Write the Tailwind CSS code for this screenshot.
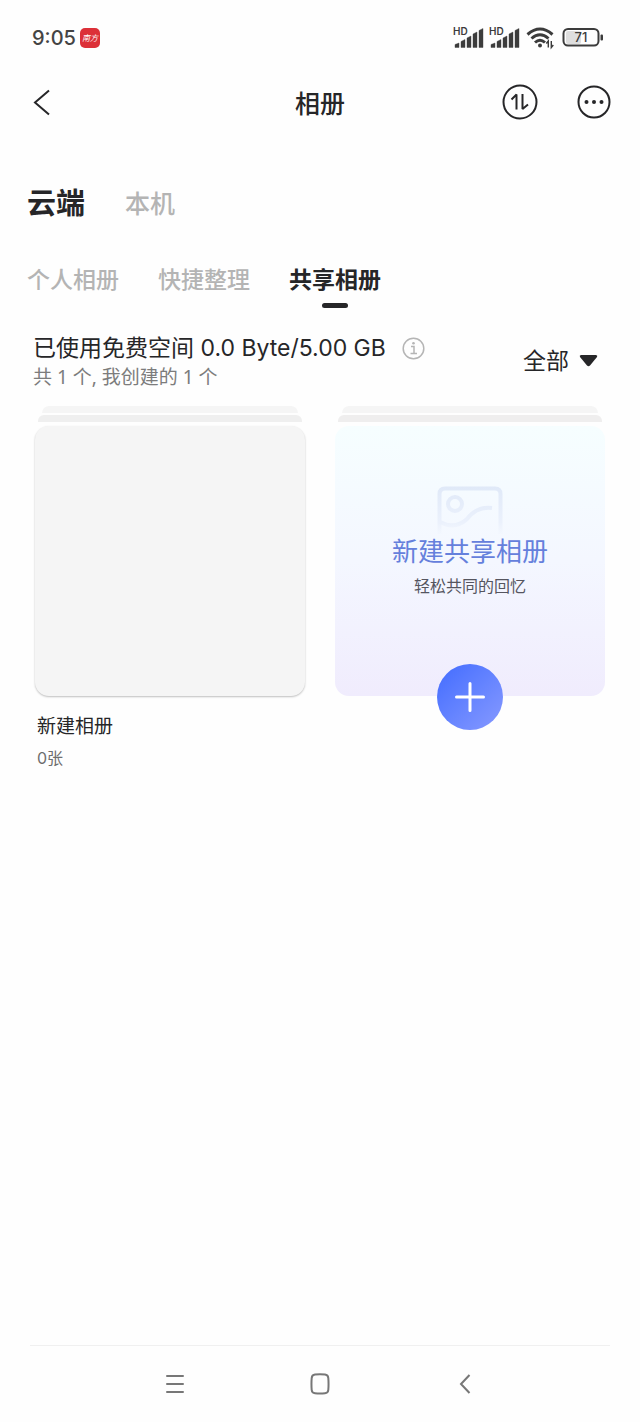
<!DOCTYPE html>
<html lang="zh-CN">
<head>
<meta charset="utf-8">
<meta name="viewport" content="width=device-width, initial-scale=1">
<title>相册</title>
<script src="https://cdn.jsdelivr.net/npm/@tailwindcss/browser@4"></script>
</head>
<body class="min-h-screen flex flex-col bg-[#fefefe] text-[#262628] font-['Inter','Noto_Sans_CJK_SC',sans-serif]">

<!-- Status bar -->
<div class="flex items-center justify-between pl-8 pr-9 pt-6 h-[52px]">
  <div class="flex items-center gap-1">
    <span class="text-[20px] leading-6 font-medium text-[#444]">9:05</span>
    <span class="relative size-5 rounded-[5px] bg-[#dc3038] text-white text-[8px] leading-5 italic text-center whitespace-nowrap" aria-label="南方+">南方</span>
  </div>
  <div class="flex items-center text-[#3c3c3c]">
    <svg class="w-[70px] h-6" viewBox="-2 0 70 24" fill="currentColor" aria-hidden="true">
      <g id="signal">
        <text x="-1" y="9" font-size="10" font-weight="600" font-family="Inter, sans-serif">HD</text>
        <path d="M1 18.500L5 17V21.500H1ZM7 15.500L11 13.500V21.500H7ZM13 12L17 10V21.500H13ZM19 8L23 6V21.500H19ZM25 4.500L29 2.500V21.500H25Z" stroke="currentColor" stroke-width=".4" stroke-linejoin="round"/>
      </g>
      <use href="#signal" x="36"/>
    </svg>
    <svg class="ml-1 w-7 h-6" viewBox="0 0 28 24" fill="none" stroke="currentColor" stroke-width="3" aria-hidden="true">
      <path d="M1.500 8.500Q14-2.500 26.500 8.500"/>
      <path d="M5.500 12.500Q14 5 22.500 12.500"/>
      <path d="M9 16.500Q14 12 19 16.500"/>
      <circle cx="14" cy="19.500" r="2" fill="currentColor" stroke="none"/>
      <path stroke-width="1.400" d="M22.300 21.500V15l-2 2.500M25.300 15v6.500l2-2.500"/>
    </svg>
    <svg class="ml-2 w-[42px] h-6" viewBox="0 0 42 24" aria-label="71%">
      <rect x="4" y="5" width="15" height="13" rx="2" fill="#dedede"/>
      <rect x="1.500" y="3" width="35" height="16.500" rx="4.500" fill="none" stroke="currentColor" stroke-width="2"/>
      <rect x="38.500" y="8.500" width="2.500" height="6" rx="1" fill="currentColor"/>
      <text x="19" y="16" text-anchor="middle" font-size="13" font-weight="500" font-family="Inter, sans-serif" fill="currentColor">71</text>
    </svg>
  </div>
</div>

<!-- Title bar -->
<header class="grid grid-cols-3 items-center px-7 h-[100px]">
  <button type="button" aria-label="返回" class="ml-1 w-6 h-9 flex items-center">
    <svg class="w-5 h-7" viewBox="0 0 20 28" fill="none" stroke="currentColor" stroke-width="2"><path d="M17 2.500L3 14.500L17 26.500"/></svg>
  </button>
  <h1 class="pt-1 text-center text-[25px] leading-9 font-medium">相册</h1>
  <div class="flex justify-end items-center gap-[38px]">
    <button type="button" aria-label="传输列表">
      <svg class="size-9" viewBox="0 0 36 36" fill="none" stroke="currentColor" stroke-width="2" stroke-linejoin="bevel">
        <circle cx="18" cy="18" r="16.500"/>
        <path d="M9.500 15.500L14.500 10.500V25.500M20.500 10V25L26 20.500"/>
      </svg>
    </button>
    <button type="button" aria-label="更多">
      <svg class="size-9" viewBox="0 0 36 36" fill="none" stroke="currentColor" stroke-width="2">
        <circle cx="18" cy="18" r="15.500"/>
        <g fill="currentColor" stroke="none"><circle cx="10.500" cy="18" r="2"/><circle cx="18" cy="18" r="2"/><circle cx="25.500" cy="18" r="2"/></g>
      </svg>
    </button>
  </div>
</header>

<!-- Source tabs -->
<nav class="flex items-center gap-10 px-[27px] pt-[30px]" aria-label="位置">
  <button type="button" aria-current="true" class="text-[29px] leading-[44px] font-bold">云端</button>
  <button type="button" class="text-[25px] leading-[44px] font-medium text-[#b4b4b4]">本机</button>
</nav>

<!-- Album tabs -->
<nav class="flex gap-[39px] px-[27px] pt-9 text-[23px] leading-9 font-medium text-[#b4b4b4]" aria-label="相册分类">
  <button type="button" class="pb-3">个人相册</button>
  <button type="button" class="pb-3">快捷整理</button>
  <button type="button" aria-current="true" class="flex flex-col items-center gap-[5px] text-[#262628] font-bold">共享相册<span class="w-[26px] h-[5px] rounded-full bg-[#262628]"></span></button>
</nav>

<main class="flex-1">
  <section class="flex justify-between items-center pl-[33px] pr-[42px] pt-[22px]">
    <div>
      <div class="flex items-center gap-4">
        <p class="text-[23px] leading-8">已使用免费空间 0.0 Byte/5.00 GB</p>
        <button type="button" aria-label="空间说明">
          <svg class="size-[23px]" viewBox="0 0 23 23" fill="none" stroke="#b5b5b5" stroke-width="1.500">
            <circle cx="11.500" cy="11.500" r="10.300"/>
            <path d="M9 9.500h3v7M8.500 16.500h6.500"/><circle cx="11.500" cy="6.300" r="1.300" fill="#b5b5b5" stroke="none"/>
          </svg>
        </button>
      </div>
      <p class="text-[19px] leading-[26px] text-[#7c7c7c] font-['Noto_Sans','Noto_Sans_CJK_SC',sans-serif]">共 1 个, 我创建的 1 个</p>
    </div>
    <label class="relative flex items-center">
      <select aria-label="筛选相册" class="appearance-none bg-transparent text-[23px] leading-8 pr-[29px]">
        <option>全部</option>
      </select>
      <svg class="absolute right-0 w-[19px] h-3 pointer-events-none" viewBox="0 0 19 12" fill="currentColor"><path d="M2 0H17Q19 .5 18 2L11 10.500Q9.500 12 8 10.500L1 2Q0 .5 2 0Z"/></svg>
    </label>
  </section>

  <section class="grid grid-cols-2 gap-[30px] px-[35px] pt-4">
    <article class="flex flex-col">
      <div class="mx-[7px] h-[7px] rounded-t-[7px] bg-[#f5f5f5]"></div>
      <div class="mx-[3px] mt-0.5 h-[7px] rounded-t-[6px] bg-[#efefef]"></div>
      <a href="#album" aria-label="新建相册" class="mt-1 aspect-square rounded-[14px] bg-[#f5f5f5] shadow-[0_1px_2px_rgba(0,0,0,0.25)]"></a>
      <h2 class="mt-4 pl-0.5 text-[19px] leading-[30px]">新建相册</h2>
      <p class="pl-0.5 text-[16px] leading-8 text-[#6e6e6e]">0张</p>
    </article>

    <article class="flex flex-col">
      <div class="mx-[7px] h-[7px] rounded-t-[7px] bg-[#f5f5f5]"></div>
      <div class="mx-[3px] mt-0.5 h-[7px] rounded-t-[6px] bg-[#efeeee]"></div>
      <button type="button" class="relative mt-1 aspect-square rounded-[14px] bg-linear-to-b from-[#f6feff] via-[#f4f7ff] to-[#f0ecfd] flex flex-col items-center pt-[60px]">
        <svg class="w-[66px] h-12" viewBox="0 0 66 48" fill="none" stroke="url(#fade)" stroke-width="4" aria-hidden="true">
          <defs><linearGradient id="fade" gradientUnits="userSpaceOnUse" x1="0" y1="0" x2="0" y2="52"><stop offset="0" stop-color="#e0e9f8"/><stop offset=".7" stop-color="#ebf1fc"/><stop offset="1" stop-color="#eff4fd" stop-opacity="0"/></linearGradient></defs>
          <path d="M2.500 48V8Q2.500 2.500 8 2.500H58Q63.500 2.500 63.500 8V48"/>
          <circle cx="18" cy="18" r="7"/>
          <path d="M3 36Q18 44 30 33Q40 20 55 22"/>
        </svg>
        <span class="text-[26px] leading-9 text-[#6580dc]">新建共享相册</span>
        <span class="mt-0.5 text-[16px] leading-7 text-[#55555f]">轻松共同的回忆</span>
        <span class="absolute -bottom-[34px] size-[66px] rounded-full bg-linear-to-br from-[#426bff] to-[#8799ff] flex items-center justify-center">
          <svg class="size-8" viewBox="0 0 32 32" stroke="#fff" stroke-width="3" stroke-linecap="round"><path d="M16 2.500V29.500M2.500 16H29.500"/></svg>
        </span>
      </button>
    </article>
  </section>
</main>

<!-- System navigation -->
<footer class="mx-[30px] h-[77px] border-t border-[#f0f0f0] flex justify-center text-[#777]">
  <div class="w-3/4 grid grid-cols-3 items-center justify-items-center">
    <button type="button" aria-label="最近任务">
      <svg class="size-5" viewBox="0 0 20 20" stroke="currentColor" stroke-width="2" stroke-linecap="round"><path d="M2 2H18M2 10H18M2 18H18"/></svg>
    </button>
    <button type="button" aria-label="主屏幕">
      <svg class="w-5 h-[22px]" viewBox="0 0 20 22" fill="none" stroke="currentColor" stroke-width="2"><path d="M5 1.500Q10 1 15 1.500Q18 1.800 18.300 5Q18.800 11 18.300 17Q18 20 15 20.300Q10 20.800 5 20.300Q2 20 1.700 17Q1.200 11 1.700 5Q2 1.800 5 1.500Z"/></svg>
    </button>
    <button type="button" aria-label="返回上一级">
      <svg class="w-3 h-[22px]" viewBox="0 0 12 22" fill="none" stroke="currentColor" stroke-width="2"><path d="M10.500 2L2 11L10.500 20"/></svg>
    </button>
  </div>
</footer>
</body>
</html>
